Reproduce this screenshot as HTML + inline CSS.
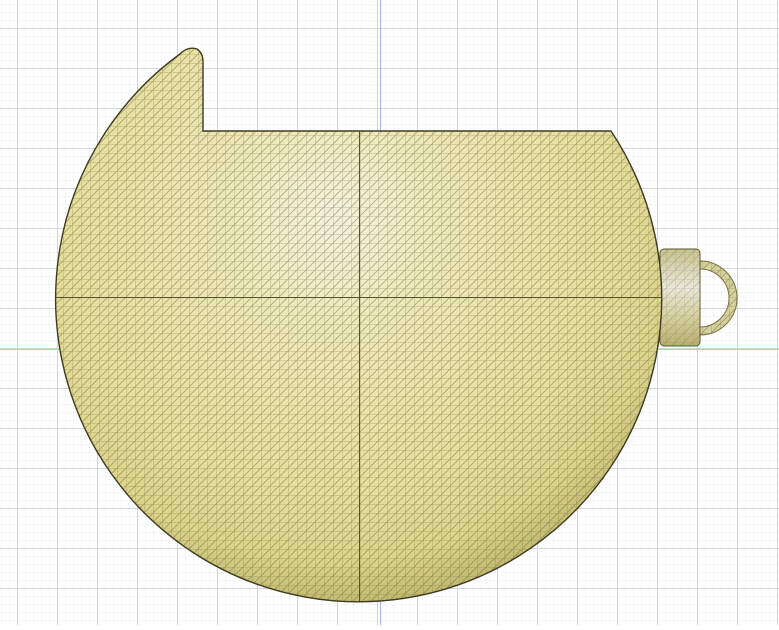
<!DOCTYPE html>
<html><head><style>html,body{margin:0;padding:0;background:#fff;overflow:hidden}</style></head>
<body>
<svg width="779" height="625" viewBox="0 0 779 625" xmlns="http://www.w3.org/2000/svg">
<defs>
<pattern id="minor" x="1" y="4" width="8" height="8" patternUnits="userSpaceOnUse">
<path d="M0 0V8M0 0H8" stroke="#ececee" stroke-width="1" fill="none"/>
</pattern>
<pattern id="major" x="17" y="28" width="40" height="40" patternUnits="userSpaceOnUse">
<path d="M0.5 0V40M0 0.5H40" stroke="#d4d5d9" stroke-width="1" fill="none"/>
</pattern>
<radialGradient id="ball" cx="335" cy="220" r="400" gradientUnits="userSpaceOnUse">
<stop offset="0" stop-color="#f3f1dc"/>
<stop offset="0.3" stop-color="#ece7b4"/>
<stop offset="0.65" stop-color="#e6df9e"/>
<stop offset="0.85" stop-color="#dcd48c"/>
<stop offset="1" stop-color="#b9b066"/>
</radialGradient>
<pattern id="mesh" x="0" y="0" width="9" height="9" patternUnits="userSpaceOnUse">
<path d="M0 0V9M0 0H9M0 9L9 0" stroke="#5e5a30" stroke-opacity="0.45" stroke-width="0.8" fill="none"/>
</pattern>
<linearGradient id="knob" x1="0" y1="0" x2="0" y2="1">
<stop offset="0" stop-color="#c9c290"/>
<stop offset="0.4" stop-color="#e8e6d8"/>
<stop offset="0.7" stop-color="#d6d0a0"/>
<stop offset="1" stop-color="#b8b070"/>
</linearGradient>
<clipPath id="shape"><path d="M611 131 A303 303 0 1 1 180 54 Q188 46 197 49 Q203 53 203 62 L203 131 Z"/></clipPath>
</defs>
<rect width="779" height="625" fill="#fff"/>
<rect width="779" height="625" fill="url(#minor)"/>
<rect width="779" height="625" fill="url(#major)"/>
<line x1="380.5" y1="0" x2="380.5" y2="625" stroke="#a9b4e6" stroke-width="1"/>
<line x1="0" y1="349.5" x2="779" y2="349.5" stroke="#9ee39e" stroke-width="1"/>
<path d="M700 265 A33 33 0 0 1 700 331" fill="none" stroke="#77723f" stroke-width="9"/>
<path d="M700 265 A33 33 0 0 1 700 331" fill="none" stroke="#d6d09c" stroke-width="7"/>
<path d="M700 265 A33 33 0 0 1 700 331" fill="none" stroke="url(#mesh)" stroke-width="7"/>
<rect x="660" y="249" width="40" height="97" rx="4" fill="url(#knob)" stroke="#5d5a33" stroke-width="1"/>
<rect x="660" y="249" width="40" height="97" rx="4" fill="url(#mesh)" opacity="0.6"/>
<path d="M611 131 A303 303 0 1 1 180 54 Q188 46 197 49 Q203 53 203 62 L203 131 Z" fill="url(#ball)"/>
<g clip-path="url(#shape)">
<rect width="779" height="625" fill="url(#mesh)"/>
<line x1="0" y1="297.5" x2="779" y2="297.5" stroke="#55522c" stroke-width="1"/>
<line x1="359.5" y1="0" x2="359.5" y2="625" stroke="#55522c" stroke-width="1"/>
</g>
<path d="M611 131 A303 303 0 1 1 180 54 Q188 46 197 49 Q203 53 203 62 L203 131 Z" fill="none" stroke="#3e3b20" stroke-width="1.4"/>
</svg>
</body></html>
